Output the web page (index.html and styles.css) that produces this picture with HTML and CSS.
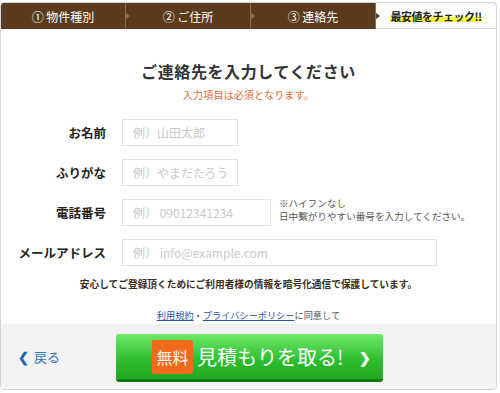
FILE: index.html
```html
<!DOCTYPE html>
<html lang="ja">
<head>
  <meta charset="utf-8">
  <title>ご連絡先の入力</title>
  <link rel="stylesheet" href="styles.css">
</head>
<body>
  <div class="card">
    <ul class="steps">
      <li class="step">① 物件種別</li>
      <li class="step">② ご住所</li>
      <li class="step">③ 連絡先</li>
      <li class="step last"><span class="mark">最安値をチェック!!</span></li>
    </ul>

    <div class="body">
      <h1>ご連絡先を入力してください</h1>
      <p class="req">入力項目は必須となります。</p>

      <div class="form">
        <div class="row">
          <label class="lbl">お名前</label>
          <input class="inp short" type="text" placeholder="例）山田太郎">
        </div>
        <div class="row">
          <label class="lbl">ふりがな</label>
          <input class="inp short" type="text" placeholder="例）やまだたろう">
        </div>
        <div class="row">
          <label class="lbl">電話番号</label>
          <input class="inp tel" type="text" placeholder="例） 09012341234">
          <p class="note">※ハイフンなし<br>日中繋がりやすい番号を入力してください。</p>
        </div>
        <div class="row">
          <label class="lbl">メールアドレス</label>
          <input class="inp wide" type="text" placeholder="例） info@example.com">
        </div>
      </div>

      <p class="secure">安心してご登録頂くためにご利用者様の情報を暗号化通信で保護しています。</p>
      <p class="agree"><a href="#">利用規約</a>・<a href="#">プライバシーポリシー</a>に同意して</p>
    </div>

    <div class="foot">
      <a class="back" href="#"><span class="chev">&#x276E;</span>戻る</a>
      <button class="submit" type="button"><span class="free">無料</span>見積もりを取る!<span class="go">&#x276F;</span></button>
    </div>
  </div>
</body>
</html>
```

FILE: styles.css
```css
body {margin:0; background:#fff; font-family:"Noto Sans CJK JP","Noto Sans",sans-serif; color:#333;}

.card {width:495px; margin-top:2px; border:1px solid #cfd6de; border-radius:4px; overflow:hidden; background:#fff;}

.steps {display:flex; margin:0; padding:0; list-style:none; height:26px; background:#5b3b1c;}
.step {position:relative; width:125px; display:flex; align-items:center; justify-content:center; color:#fff; font-size:12px; border-right:1px solid #8a6f55; box-sizing:border-box;}
.step::after {content:""; position:absolute; right:-5px; top:10px; border-left:4px solid #8a6f55; border-top:3px solid transparent; border-bottom:3px solid transparent; z-index:1;}
.step.last {flex:1; background:#fff; color:#222; font-size:11px; font-weight:bold; border-right:0; border-bottom:1px solid #ddd;}
.step.last::after {display:none;}
.step:nth-child(3)::after {border-left-color:#5b3b1c; right:-5px;}
.mark {background:linear-gradient(transparent 58%, #fbf53a 58%, #fbf53a 88%, transparent 88%); letter-spacing:-0.5px;}

.body {padding-top:30px;}
h1 {margin:0; text-align:center; font-size:16px; font-weight:bold; letter-spacing:0.6px; line-height:24px; color:#333;}
.req {margin:4px 0 0; text-align:center; font-size:10px; letter-spacing:0.2px; color:#dd6a33;}

.form {display:flex; flex-direction:column; gap:13px; margin-top:17px;}
.row {display:flex; align-items:center; gap:16px;}
.lbl {width:105px; text-align:right; font-size:12.5px; font-weight:bold; color:#222;}
.inp {height:27px; box-sizing:border-box; border:1px solid #e3e3e3; padding:0 10px; font-family:inherit; font-size:12px; color:#333; outline:none;}
.inp::placeholder {color:#c9c9c9;}
.short {width:116px;}
.tel {width:149px;}
.wide {width:315px;}
.note {margin:-6px 0 0 -8px; font-size:9.6px; line-height:13px; color:#555;}

.secure {margin:11px 0 0; text-align:center; font-size:9.7px; font-weight:bold; color:#3b2d1e;}
.agree {margin:18px 0 0; text-align:center; font-size:9.2px; color:#555; line-height:12px;}
.agree a {color:#2456b3;}

.foot {display:flex; align-items:center; height:65px; margin-top:3px; background:#f2f2f2;}
.back {display:flex; align-items:center; gap:5px; width:115px; padding-left:17px; box-sizing:border-box; font-size:13px; color:#2f73b8; text-decoration:none;}
.chev {font-size:13px; font-weight:bold; color:#1f66b1;}
.submit {display:flex; align-items:center; width:267px; height:45px; padding:0 0 0 36px; border:0; border-radius:3px; background:linear-gradient(#6ee86a, #2dbd2d 60%, #20a820); box-shadow:0 3px 0 #137a13; font-family:inherit; font-size:20px; color:#fff; cursor:pointer;}
.free {display:flex; align-items:center; justify-content:center; width:41px; height:34px; margin-right:4px; border-radius:2px; background:#f26a1b; font-size:16px;}
.go {margin-left:16px; font-size:14px; font-weight:bold;}
```
